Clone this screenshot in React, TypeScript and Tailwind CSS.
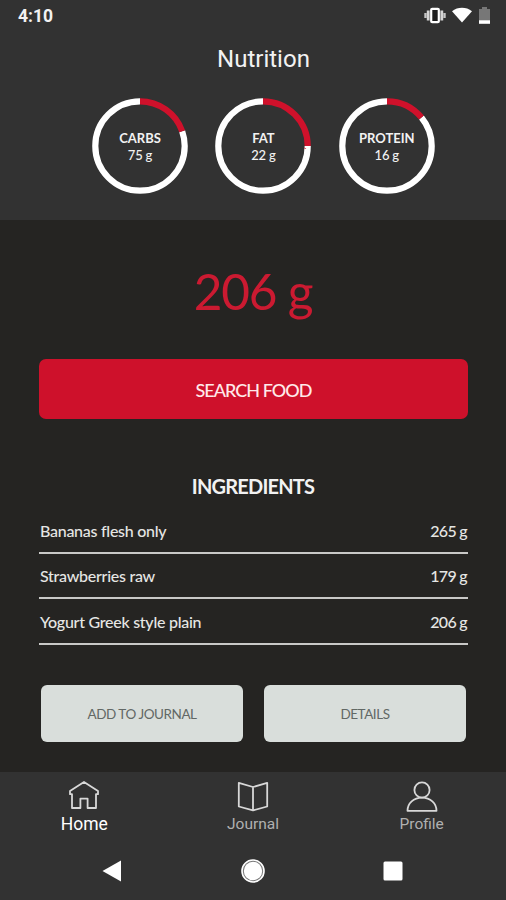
import React, { useState } from 'react';

const macros = [
  { name: 'CARBS', grams: 75, share: 0.196 },
  { name: 'FAT', grams: 22, share: 0.25 },
  { name: 'PROTEIN', grams: 16, share: 0.14 },
];

const ingredients = [
  { name: 'Bananas flesh only', grams: 265 },
  { name: 'Strawberries raw', grams: 179 },
  { name: 'Yogurt Greek style plain', grams: 206 },
];

const HomeIcon = () => (
  <svg width="34" height="32" viewBox="0 0 34 32" fill="none" stroke="currentColor" strokeWidth="1.8" strokeLinejoin="round">
    <path d="M5 28V14.2H3V11L17 2l14 9v3.2h-2V28h-8.4V18.6h-7.2V28Z" />
  </svg>
);

const JournalIcon = () => (
  <svg width="34" height="32" viewBox="0 0 34 32" fill="none" stroke="currentColor" strokeWidth="1.8" strokeLinejoin="round">
    <path d="M2.8 2.8 17 7l14.2-4.2v23.7L17 30.4 2.8 26.5ZM17 7v23.4" />
  </svg>
);

const ProfileIcon = () => (
  <svg width="34" height="32" viewBox="0 0 34 32" fill="none" stroke="currentColor" strokeWidth="1.8" strokeLinejoin="round">
    <circle cx="17" cy="10" r="7.6" />
    <path d="M2.5 30.8c0-7.4 6.2-13.2 14.5-13.2s14.5 5.8 14.5 13.2Z" />
  </svg>
);

const tabs = [
  { name: 'Home', icon: HomeIcon },
  { name: 'Journal', icon: JournalIcon },
  { name: 'Profile', icon: ProfileIcon },
];

function MacroRing({ name, grams, share }: { name: string; grams: number; share: number }) {
  const filled = share * 100;

  return (
    <div className="relative h-24 w-24">
      <svg className="h-24 w-24 -rotate-90" viewBox="0 0 96 96" fill="none" strokeWidth="6.2">
        <circle
          cx="48"
          cy="48"
          r="44.7"
          stroke="#ffffff"
          pathLength="100"
          strokeDasharray={`${100 - filled} ${filled}`}
          strokeDashoffset={-filled}
        />
        <circle cx="48" cy="48" r="44.7" stroke="#cf112b" pathLength="100" strokeDasharray={`${filled} ${100 - filled}`} />
      </svg>
      <div className="absolute inset-0 flex flex-col items-center pt-[32px] text-[13px] leading-[17px]">
        <span className="font-bold">{name}</span>
        <span className="font-medium tracking-[-0.2px]">{grams} g</span>
      </div>
    </div>
  );
}

export default function App() {
  const [active, setActive] = useState('Home');

  return (
    <div className="flex h-[900px] w-[506px] flex-col overflow-hidden bg-[#252422] font-['Lato',sans-serif] text-[#f2f2f2]">
      <header className="h-[220px] shrink-0 bg-[#323232]">
        {/* Status bar */}
        <div className="flex h-8 items-center justify-between pl-[18px] pr-[16px]">
          <span className="font-['Roboto',sans-serif] text-[17.5px] font-bold leading-8">4:10</span>
          <div className="flex items-center">
            <svg width="22" height="18" viewBox="0 0 22 18">
              <path d="M4.2 3.5v10M17.8 3.5v10" stroke="#d6d6d6" strokeWidth="2.8" />
              <path d="M1.5 6v5M20.5 6v5" stroke="#c6c6c6" strokeWidth="2.4" />
              <rect x="7.2" y="1.8" width="7.6" height="13.4" rx="1" fill="#1c1c1c" stroke="#ffffff" strokeWidth="2.2" />
            </svg>
            <svg className="ml-[6px]" width="20" height="18" viewBox="0 0 20 18">
              <path d="M0 4.2C5.8-.4 14.2-.4 20 4.2L10 15.6Z" fill="#ffffff" />
            </svg>
            <svg className="ml-[7px]" width="11" height="18" viewBox="0 0 11 18">
              <path d="M3 0h5v2h3v11H0V2h3Z" fill="#777777" />
              <path d="M0 13.2h11v3.6H0Z" fill="#ffffff" />
            </svg>
          </div>
        </div>
        <h1 className="pl-[21px] text-center font-['Roboto',sans-serif] text-[24px] leading-[54px]">Nutrition</h1>
        <div className="mt-3 flex gap-[27.4px] pl-[92px]">
          {macros.map((m) => (
            <MacroRing key={m.name} {...m} />
          ))}
        </div>
      </header>

      <main className="flex h-[552px] shrink-0 flex-col px-[39px]">
        <p className="mt-[41px] text-center text-[49.5px] leading-[60px] tracking-[-1.2px] text-[#cb1a31]">206 g</p>
        <button className="mt-[38px] h-[60px] w-[429px] rounded-[7px] bg-[#ce112b] pt-0.5 text-[18px] font-medium tracking-[-0.95px] text-[#ffe9e9]">
          SEARCH FOOD
        </button>

        <h2 className="mt-[53px] text-center text-[20px] font-bold leading-7 tracking-[-0.8px]">INGREDIENTS</h2>
        <ul className="mt-[8px] w-[429px]">
          {ingredients.map((item) => (
            <li
              key={item.name}
              className="flex h-[45.6px] items-end justify-between border-b-[2.5px] border-[#c9c9c7] pb-[11px] text-[16px] font-medium leading-5 text-[#e6e6e4]"
            >
              <span className="pl-px tracking-[-0.27px]">{item.name}</span>
              <span className="pr-px tracking-[-0.7px]">{item.grams} g</span>
            </li>
          ))}
        </ul>

        <div className="mt-[40px] flex gap-[21px] px-0.5 text-[13.5px] tracking-[-0.45px] text-[#626865]">
          <button className="h-[57px] w-[202px] shrink-0 rounded-[6px] bg-[#d9dedb] pt-0.5">ADD TO JOURNAL</button>
          <button className="h-[57px] w-[202px] shrink-0 rounded-[6px] bg-[#d9dedb] pt-0.5">DETAILS</button>
        </div>
      </main>

      <footer className="flex-1 bg-[#323232] font-['Roboto',sans-serif]">
        <nav className="grid h-[68px] grid-cols-3">
          {tabs.map(({ name, icon: Icon }) => (
            <button key={name} onClick={() => setActive(name)} className="flex flex-col items-center pt-2 text-[#d8d8d8]">
              <Icon />
              <span
                className={
                  active === name ? 'text-[17.5px] leading-6 text-white' : 'text-[15.5px] leading-6 text-[#b0b0b0]'
                }
              >
                {name}
              </span>
            </button>
          ))}
        </nav>
        {/* System buttons */}
        <div className="flex h-[62px] items-center justify-between pl-[102px] pr-[103px]">
          <svg width="20" height="22" viewBox="0 0 20 22">
            <path d="M.5 11 19 .5v21Z" fill="#ffffff" />
          </svg>
          <svg width="24" height="24" viewBox="0 0 24 24">
            <circle cx="12" cy="12" r="11" fill="#777777" stroke="#ffffff" strokeWidth="1.6" />
            <circle cx="12" cy="12" r="9.2" fill="#ffffff" />
          </svg>
          <svg width="20" height="20" viewBox="0 0 20 20">
            <rect x="0.5" y="0.5" width="19" height="19" rx="1.5" fill="#ffffff" />
          </svg>
        </div>
      </footer>
    </div>
  );
}
